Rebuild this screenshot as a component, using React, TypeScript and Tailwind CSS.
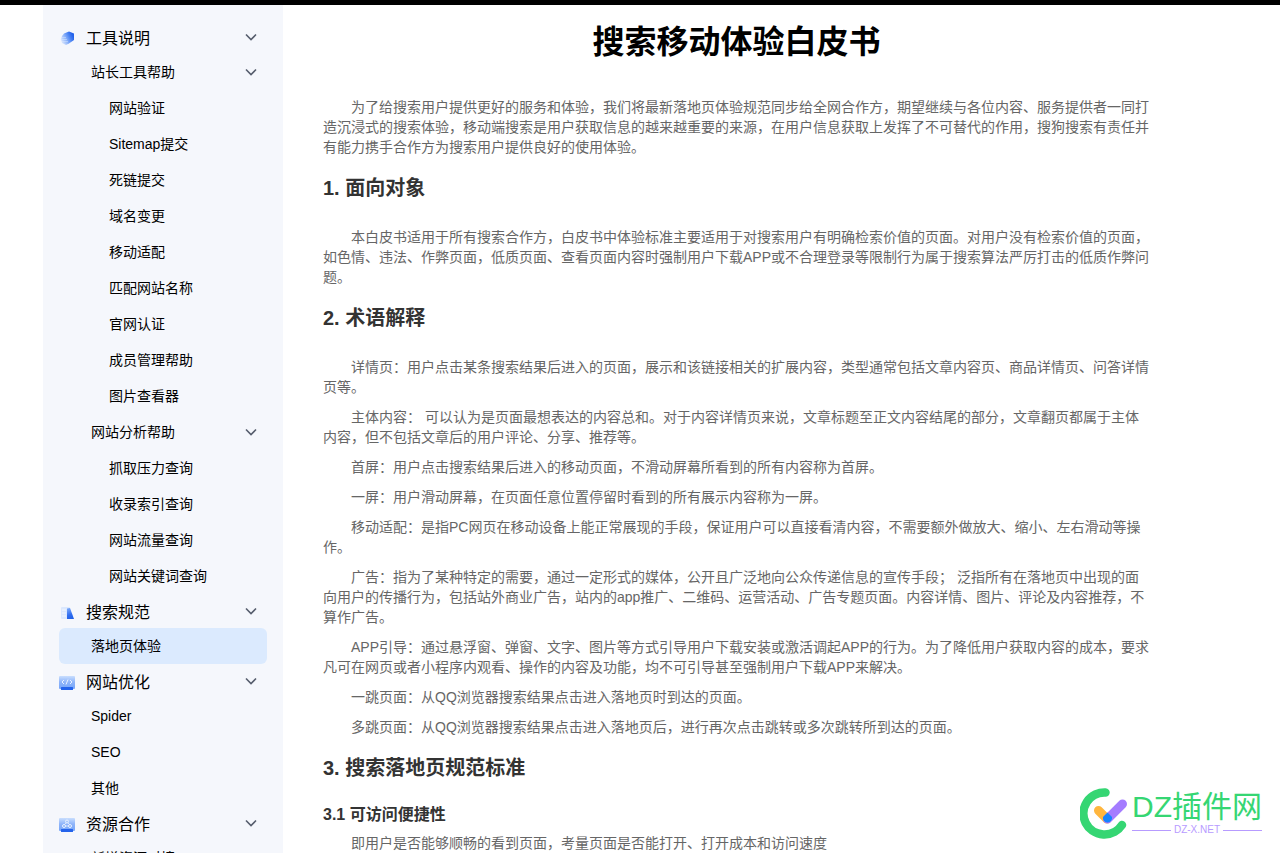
import React from 'react';

type Item = { label: string; active?: boolean };
type Branch = { label?: string; items: Item[] };
type Group = { title: string; icon: React.ReactNode; branches: Branch[] };

const groups: Group[] = [
  {
    title: '工具说明',
    icon: (
      <svg width="16" height="16" viewBox="0 0 16 16" fill="none">
        <defs>
          <linearGradient id="cube" x1="2" y1="11" x2="14" y2="5" gradientUnits="userSpaceOnUse">
            <stop stopColor="#dfeaff" />
            <stop offset="0.4" stopColor="#94b8fa" />
            <stop offset="0.75" stopColor="#4a83f3" />
            <stop offset="1" stopColor="#2563eb" />
          </linearGradient>
        </defs>
        <path d="M5 2.5L10 0.5L15 2.5V9L10 12.5L7 14L3 12L2 8.5L3 5Z" fill="url(#cube)" />
        <path d="M2 6.5H7M1.5 8.5H8M3 10.5H9" stroke="#dbe8ff" strokeWidth="0.8" strokeOpacity="0.6" />
      </svg>
    ),
    branches: [
      {
        label: '站长工具帮助',
        items: [
          { label: '网站验证' },
          { label: 'Sitemap提交' },
          { label: '死链提交' },
          { label: '域名变更' },
          { label: '移动适配' },
          { label: '匹配网站名称' },
          { label: '官网认证' },
          { label: '成员管理帮助' },
          { label: '图片查看器' },
        ],
      },
      {
        label: '网站分析帮助',
        items: [
          { label: '抓取压力查询' },
          { label: '收录索引查询' },
          { label: '网站流量查询' },
          { label: '网站关键词查询' },
        ],
      },
    ],
  },
  {
    title: '搜索规范',
    icon: (
      <svg width="16" height="16" viewBox="0 0 16 16" fill="none">
        <defs>
          <linearGradient id="ruler" x1="9" y1="3" x2="13" y2="14" gradientUnits="userSpaceOnUse">
            <stop stopColor="#7eabf9" />
            <stop offset="0.6" stopColor="#2f6df0" />
            <stop offset="1" stopColor="#1f5fe6" />
          </linearGradient>
        </defs>
        <rect x="2" y="2" width="9" height="12" rx="1" fill="#dbe8fe" />
        <path d="M3 5H7M3 8H7M3 11H7" stroke="#f3f7ff" />
        <path d="M8 3.5L11 3L15 14H8Z" fill="url(#ruler)" />
      </svg>
    ),
    branches: [{ items: [{ label: '落地页体验', active: true }] }],
  },
  {
    title: '网站优化',
    icon: (
      <svg width="16" height="16" viewBox="0 0 16 16" fill="none">
        <defs>
          <linearGradient id="screen" x1="8" y1="1" x2="8" y2="13" gradientUnits="userSpaceOnUse">
            <stop stopColor="#c9defe" />
            <stop offset="0.5" stopColor="#8fb5fa" />
            <stop offset="1" stopColor="#79a7f9" />
          </linearGradient>
        </defs>
        <rect y="1" width="16" height="13" rx="1" fill="url(#screen)" />
        <path d="M5 5L3 7L5 9M11 5L13 7L11 9M9 4.5L7 9.5" stroke="#eaf2ff" />
        <rect x="2" y="12" width="12" height="3" rx="0.5" fill="#2463eb" />
      </svg>
    ),
    branches: [{ items: [{ label: 'Spider' }, { label: 'SEO' }, { label: '其他' }] }],
  },
  {
    title: '资源合作',
    icon: (
      <svg width="16" height="16" viewBox="0 0 16 16" fill="none">
        <rect y="1" width="16" height="13" rx="1" fill="url(#screen)" />
        <circle cx="8" cy="4.5" r="1.5" stroke="#eaf2ff" />
        <circle cx="5" cy="9" r="1.5" stroke="#eaf2ff" />
        <circle cx="11" cy="9" r="1.5" stroke="#eaf2ff" />
        <path d="M7 6L5.5 7.5M9 6L10.5 7.5M6.5 9H9.5" stroke="#eaf2ff" strokeWidth="0.8" />
        <rect x="2" y="12" width="12" height="3" rx="0.5" fill="#2463eb" />
      </svg>
    ),
    branches: [{ items: [{ label: '新增资源对接' }] }],
  },
];

const Chevron: React.FC = () => (
  <svg width="12" height="8" viewBox="0 0 12 8" fill="none" className="shrink-0">
    <path d="M1 1.5L6 6.5L11 1.5" stroke="#565d6d" strokeWidth="1.6" />
  </svg>
);

const Sidebar: React.FC = () => (
  <nav className="w-60 shrink-0 bg-[#f5f7fc] px-4 pt-[15px] text-sm text-black">
    {groups.map((group) => (
      <section key={group.title}>
        <button type="button" className="flex h-[34px] w-full items-center pr-[10px] text-left text-base">
          <span className="flex flex-1 items-center gap-[11px] pt-1">
            {group.icon}
            {group.title}
          </span>
          <Chevron />
        </button>
        {group.branches.map((branch, index) => (
          <div key={index}>
            {branch.label && (
              <button type="button" className="flex h-9 w-full items-center justify-between pr-[10px] pl-8 text-left">
                {branch.label}
                <Chevron />
              </button>
            )}
            <ul>
              {branch.items.map((item) => (
                <li key={item.label}>
                  <a
                    href="#"
                    className={`flex h-9 items-center rounded-md ${branch.label ? 'pl-[50px]' : 'pl-8'} ${item.active ? 'bg-[#dbeafe]' : ''}`}
                  >
                    {item.label}
                  </a>
                </li>
              ))}
            </ul>
          </div>
        ))}
      </section>
    ))}
  </nav>
);

const sections = [
  {
    title: '1. 面向对象',
    paragraphs: [
      '本白皮书适用于所有搜索合作方，白皮书中体验标准主要适用于对搜索用户有明确检索价值的页面。对用户没有检索价值的页面，如色情、违法、作弊页面，低质页面、查看页面内容时强制用户下载APP或不合理登录等限制行为属于搜索算法严厉打击的低质作弊问题。',
    ],
  },
  {
    title: '2. 术语解释',
    paragraphs: [
      '详情页：用户点击某条搜索结果后进入的页面，展示和该链接相关的扩展内容，类型通常包括文章内容页、商品详情页、问答详情页等。',
      '主体内容： 可以认为是页面最想表达的内容总和。对于内容详情页来说，文章标题至正文内容结尾的部分，文章翻页都属于主体内容，但不包括文章后的用户评论、分享、推荐等。',
      '首屏：用户点击搜索结果后进入的移动页面，不滑动屏幕所看到的所有内容称为首屏。',
      '一屏：用户滑动屏幕，在页面任意位置停留时看到的所有展示内容称为一屏。',
      '移动适配：是指PC网页在移动设备上能正常展现的手段，保证用户可以直接看清内容，不需要额外做放大、缩小、左右滑动等操作。',
      '广告：指为了某种特定的需要，通过一定形式的媒体，公开且广泛地向公众传递信息的宣传手段； 泛指所有在落地页中出现的面向用户的传播行为，包括站外商业广告，站内的app推广、二维码、运营活动、广告专题页面。内容详情、图片、评论及内容推荐，不算作广告。',
      'APP引导：通过悬浮窗、弹窗、文字、图片等方式引导用户下载安装或激活调起APP的行为。为了降低用户获取内容的成本，要求凡可在网页或者小程序内观看、操作的内容及功能，均不可引导甚至强制用户下载APP来解决。',
      '一跳页面：从QQ浏览器搜索结果点击进入落地页时到达的页面。',
      '多跳页面：从QQ浏览器搜索结果点击进入落地页后，进行再次点击跳转或多次跳转所到达的页面。',
    ],
  },
  {
    title: '3. 搜索落地页规范标准',
    subtitle: '3.1 可访问便捷性',
    paragraphs: ['即用户是否能够顺畅的看到页面，考量页面是否能打开、打开成本和访问速度'],
  },
];

const Paragraph: React.FC<{ children: React.ReactNode }> = ({ children }) => (
  <p className="mb-[10px] indent-7 text-sm leading-5 text-[#666]">{children}</p>
);

const Watermark: React.FC = () => (
  <div className="absolute right-[18px] bottom-[14px] flex items-center gap-1">
    <svg width="48" height="52" viewBox="0 0 48 52" fill="none">
      <path d="M25.500 5.500A21 21 0 1 0 42 38" stroke="#35d673" strokeWidth="8.500" strokeLinecap="round" />
      <path d="M18.500 23.500L27 32" stroke="#ffb63e" strokeWidth="9" strokeLinecap="round" />
      <path d="M42.500 17L27.500 32" stroke="#a47cff" strokeWidth="9" strokeLinecap="round" />
      <path d="M27.500 25.500L32 30A4.600 4.600 0 1 1 23 30Z" fill="#1684fc" />
    </svg>
    <div className="flex flex-col pt-[2px] pb-1">
      <span className="text-[30px] leading-9 text-[#35d673]">DZ插件网</span>
      <div className="flex items-center gap-[3px] text-[10px] leading-[10px] text-[#b79bff]">
        <span className="h-px flex-1 bg-[#b79bff]" />
        DZ-X.NET
        <span className="h-px flex-1 bg-[#b79bff]" />
      </div>
    </div>
  </div>
);

const App: React.FC = () => (
  <div
    lang="zh-CN"
    className="relative flex h-screen flex-col overflow-hidden border-t-[5px] border-black bg-white font-['Liberation_Sans','Noto_Sans_CJK_SC',sans-serif]"
  >
    <div className="mx-auto flex min-h-0 w-full max-w-[1194px] flex-1">
      <Sidebar />
      <main className="min-w-0 flex-1 pt-[13px] pr-[87px] pl-10 text-[#333]">
        <h1 className="mb-[31px] text-center text-[32px] leading-[48px] font-bold text-black">搜索移动体验白皮书</h1>
        <Paragraph>
          为了给搜索用户提供更好的服务和体验，我们将最新落地页体验规范同步给全网合作方，期望继续与各位内容、服务提供者一同打造沉浸式的搜索体验，移动端搜索是用户获取信息的越来越重要的来源，在用户信息获取上发挥了不可替代的作用，搜狗搜索有责任并有能力携手合作方为搜索用户提供良好的使用体验。
        </Paragraph>
        {sections.map((section) => (
          <section key={section.title}>
            <h2 className="mb-[18px] text-xl leading-[42px] font-bold">{section.title}</h2>
            {section.subtitle && <h3 className="mb-[10px] text-base leading-4 font-bold">{section.subtitle}</h3>}
            {section.paragraphs.map((text) => (
              <Paragraph key={text}>{text}</Paragraph>
            ))}
          </section>
        ))}
      </main>
    </div>
    <Watermark />
  </div>
);

export default App;
